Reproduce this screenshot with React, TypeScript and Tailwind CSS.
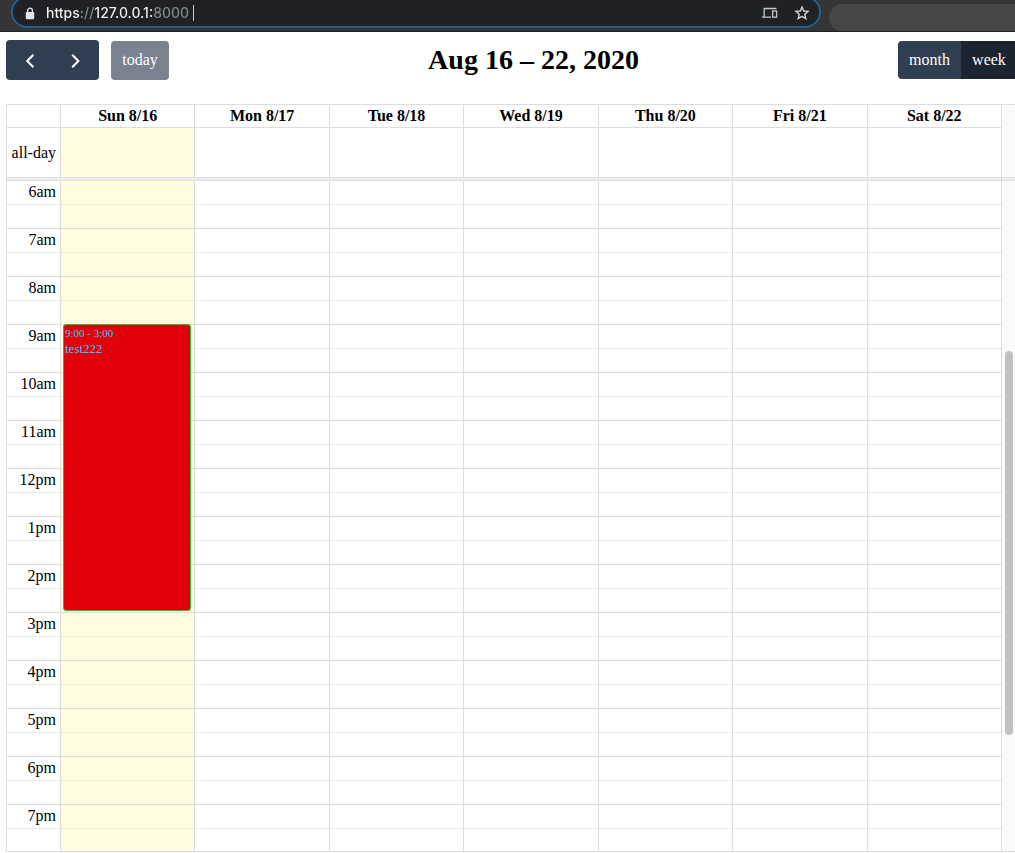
import React from "react";

const days = ["Sun 8/16", "Mon 8/17", "Tue 8/18", "Wed 8/19", "Thu 8/20", "Fri 8/21", "Sat 8/22"];
const hours = [
  "6am", "7am", "8am", "9am", "10am", "11am", "12pm",
  "1pm", "2pm", "3pm", "4pm", "5pm", "6pm", "7pm",
];

function BrowserBar() {
  return (
    <header className="flex h-8 items-start border-b border-[#202124] bg-[#353535]">
      <div className="-mt-1 ml-[11px] flex h-8 w-[810px] shrink-0 items-center rounded-full border-2 border-[#24608f] bg-[#202124] pl-3 pr-[9px] pt-0.5">
        <svg width="10" height="13" viewBox="0 0 10 13" className="shrink-0" aria-hidden="true">
          <path d="M2.6 5.5V3.6a2.4 2.4 0 0 1 4.8 0v1.9" fill="none" stroke="#e4e4e4" strokeWidth="1.3" />
          <rect x="0.8" y="5" width="8.4" height="7.2" rx="1" fill="#e4e4e4" />
        </svg>
        <input
          aria-label="Address"
          type="text"
          defaultValue="https://127.0.0.1:8000"
          className="ml-[11px] w-[147px] bg-[linear-gradient(90deg,#f5f5f5_35px,#85888c_35px,#85888c_48px,#f5f5f5_48px,#f5f5f5_107px,#85888c_107px)] bg-clip-text font-['Inter','Roboto',sans-serif] text-[14px] font-medium leading-5 text-transparent outline-none"
        />
        <span className="h-4 w-px bg-[#c8c8c8]" />
        <div className="ml-auto flex items-center gap-4">
          <button type="button" aria-label="Send to your devices">
            <svg width="16" height="12" viewBox="0 0 16 12" fill="none" stroke="#c4c6c9" strokeWidth="1.3" aria-hidden="true">
              <path d="M14.5 1.5H2.2v8M0 10.2h9" />
              <rect x="10.6" y="4" width="4" height="6.2" />
            </svg>
          </button>
          <button type="button" aria-label="Bookmark this page">
            <svg width="16" height="16" viewBox="0 0 16 16" fill="none" stroke="#d0d2d4" strokeWidth="1.4" aria-hidden="true">
              <path d="M8 2l1.7 4 4.4.4-3.3 2.9 1 4.2L8 11.3l-3.8 2.2 1-4.2-3.3-2.9 4.4-.4z" />
            </svg>
          </button>
        </div>
      </div>
      <div className="-mr-8 ml-2 mt-1 h-[27px] flex-1 rounded-full bg-[#464646]" />
    </header>
  );
}

function Toolbar() {
  return (
    <div className="-mr-2 flex h-10 items-center justify-between">
      <div className="flex items-center gap-3">
        <div className="flex h-10 overflow-hidden rounded bg-[#2f3e50] text-white">
          <button type="button" aria-label="Previous week" className="flex w-[47px] items-center justify-center">
            <svg width="10" height="16" viewBox="0 0 10 16" fill="none" stroke="currentColor" strokeWidth="2" aria-hidden="true">
              <path d="M8.4 2.7L2.2 9l6.2 6.3" />
            </svg>
          </button>
          <button type="button" aria-label="Next week" className="flex w-[46px] items-center justify-center">
            <svg width="10" height="16" viewBox="0 0 10 16" fill="none" stroke="currentColor" strokeWidth="2" aria-hidden="true">
              <path d="M1.2 2.7L7.4 9l-6.2 6.3" />
            </svg>
          </button>
        </div>
        <button type="button" className="mt-px h-[39px] w-[58px] rounded bg-[#79828e] pb-0.5 text-white">today</button>
      </div>
      <h1 className="text-[28px] font-bold leading-8">Aug 16 – 22, 2020</h1>
      <div className="flex h-[38px] overflow-hidden rounded text-white">
        <button type="button" className="w-[63px] bg-[#2f3e50]">month</button>
        <button type="button" className="w-[62px] bg-[#1b252f] pr-1.5">week</button>
      </div>
    </div>
  );
}

function Event() {
  return (
    <a
      href="#test222"
      className="absolute inset-x-0.5 top-0 z-10 mr-px mt-[-1px] block h-[287px] rounded-[3px] border border-[#1fc42d] bg-[#e1000c] px-px pt-px text-left text-[#37c8fa]"
    >
      <div className="text-[11px] leading-[15px]">9:00 - 3:00</div>
      <div className="text-[13px] leading-4">test222</div>
    </a>
  );
}

function WeekGrid() {
  return (
    <div className="flex">
      <div className="min-w-0 flex-1">
        <table className="w-full table-fixed border-separate border-spacing-0 border-r border-b border-[#ddd]">
          <colgroup>
            <col className="w-[54px]" />
            {days.map((d) => <col key={d} />)}
          </colgroup>
          <thead>
            <tr className="h-[23px]">
              <td className="border-l border-t border-[#ddd] p-0" />
              {days.map((d) => (
                <th key={d} scope="col" className="border-l border-t border-[#ddd] p-0 text-center font-bold">{d}</th>
              ))}
            </tr>
          </thead>
          <tbody>
            <tr className="h-[50px]">
              <th scope="row" className="border-l border-t border-[#ddd] p-0 pr-1 text-right font-normal">all-day</th>
              {days.map((d, i) => (
                <td key={d} className={`border-l border-t border-[#ddd] p-0 ${i === 0 ? "bg-[#fffbde]" : ""}`} />
              ))}
            </tr>
            <tr className="h-[3px]">
              <td colSpan={8} className="h-[3px] border-l border-t border-[#ddd] bg-[#eee] p-0" />
            </tr>
            {hours.map((h, n) => (
              <React.Fragment key={h}>
                <tr className="h-6">
                  <th scope="row" className="border-l border-t border-[#ddd] p-0 pb-0.5 pr-1 text-right font-normal">{h}</th>
                  {days.map((d, i) => (
                    <td key={d} className={`relative border-l border-t border-[#ddd] p-0 ${i === 0 ? "bg-[#fffbde]" : ""}`}>
                      {h === "9am" && i === 0 && <Event />}
                    </td>
                  ))}
                </tr>
                <tr className={n === hours.length - 1 ? "h-[23px]" : "h-6"}>
                  <td className="border-l border-t border-[#ddd] p-0 [border-top-style:dotted]" />
                  {days.map((d, i) => (
                    <td key={d} className={`border-l border-t border-[#ddd] p-0 [border-top-style:dotted] ${i === 0 ? "bg-[#fffbde]" : ""}`} />
                  ))}
                </tr>
              </React.Fragment>
            ))}
          </tbody>
        </table>
      </div>
      <div className="flex w-[13px] shrink-0 flex-col border-y border-[#ddd] bg-[#fafafa]" aria-hidden="true">
        <div className="h-[72px]" />
        <div className="h-1 border-y border-[#ddd] bg-[#eee]" />
        <div className="ml-[3px] mt-[170px] h-96 w-2 rounded-full bg-[#c1c1c1]" />
      </div>
    </div>
  );
}

export default function App() {
  return (
    <div className="overflow-hidden bg-white font-['Liberation_Serif',serif] text-[16px] leading-[18px] text-black">
      <BrowserBar />
      <main className="flex flex-col gap-6 pl-1.5 pt-2">
        <Toolbar />
        <WeekGrid />
      </main>
    </div>
  );
}
